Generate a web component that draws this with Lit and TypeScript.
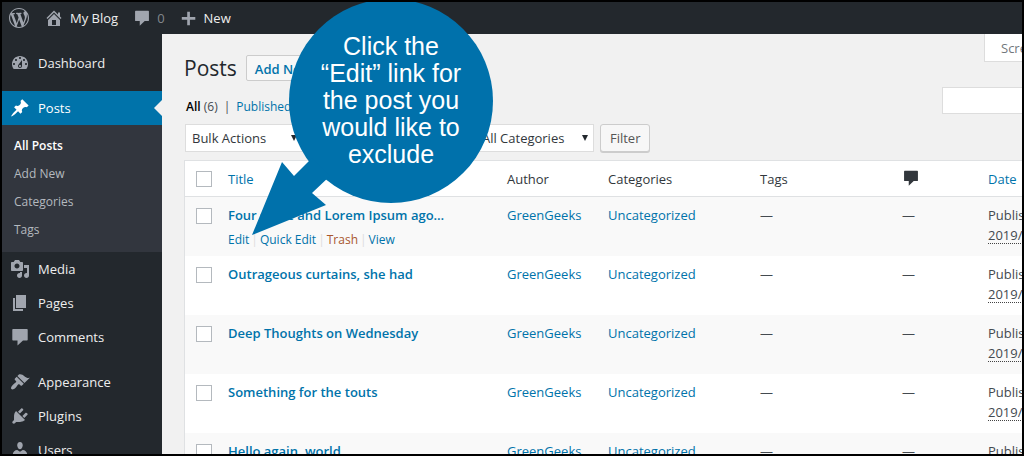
import { LitElement, html, css, svg, nothing } from "lit";
import { customElement } from "lit/decorators.js";
import { classMap } from "lit/directives/class-map.js";

const ICONS: Record<string, string> = {
  wordpress:
    "M20 10c0-5.51-4.49-10-10-10C4.48 0 0 4.49 0 10c0 5.52 4.48 10 10 10 5.51 0 10-4.48 10-10zM7.78 15.37L4.37 6.22c.55-.02 1.17-.08 1.17-.08.5-.06.44-1.13-.06-1.11 0 0-1.45.11-2.37.11-.18 0-.37 0-.58-.01C4.12 2.69 6.87 1.11 10 1.11c2.33 0 4.45.87 6.05 2.34-.68-.11-1.65.39-1.65 1.58 0 .74.45 1.36.9 2.1.35.61.55 1.36.55 2.46 0 1.49-1.4 5-1.4 5l-3.03-8.37c.54-.02.82-.17.82-.17.5-.05.44-1.25-.06-1.22 0 0-1.44.12-2.38.12-.87 0-2.33-.12-2.33-.12-.5-.03-.56 1.2-.06 1.22l.92.08 1.26 3.41zM17.41 10c.24-.64.74-1.87.43-4.25.7 1.29 1.05 2.71 1.05 4.25 0 3.29-1.73 6.24-4.4 7.78.97-2.59 1.94-5.2 2.92-7.78zM6.1 18.09C3.12 16.65 1.11 13.53 1.11 10c0-1.3.23-2.48.72-3.59C3.25 10.3 4.67 14.2 6.1 18.09zm4.03-6.63l2.58 6.98c-.86.29-1.76.45-2.71.45-.79 0-1.57-.11-2.29-.33.81-2.38 1.62-4.74 2.42-7.1z",
  home: "M16 8.5l1.53 1.53-1.06 1.06L10 4.6l-6.47 6.49-1.06-1.06L10 2.5l4 4v-2h2v4zm-6-2.46l6 5.99V18H4v-5.97zM12 17v-5H8v5h4z",
  plus: "M17 9v3h-6v6H8v-6H2V9h6V3h3v6z",
  dashboard:
    "M3.76 16h12.48c1.1-1.37 1.76-3.11 1.76-5 0-4.42-3.58-8-8-8s-8 3.58-8 8c0 1.89.66 3.63 1.76 5zM10 4c.55 0 1 .45 1 1s-.45 1-1 1-1-.45-1-1 .45-1 1-1zM6 6c.55 0 1 .45 1 1s-.45 1-1 1-1-.45-1-1 .45-1 1-1zm8 0c.55 0 1 .45 1 1s-.45 1-1 1-1-.45-1-1 .45-1 1-1zm-5.37 5.55L12 7v6c0 1.1-.9 2-2 2s-2-.9-2-2c0-.57.24-1.08.63-1.45zM4 10c.55 0 1 .45 1 1s-.45 1-1 1-1-.45-1-1 .45-1 1-1zm12 0c.55 0 1 .45 1 1s-.45 1-1 1-1-.45-1-1 .45-1 1-1zm-5 3c0-.55-.45-1-1-1s-1 .45-1 1 .45 1 1 1 1-.45 1-1z",
  pin: "M10.44 3.02l1.82-1.82 6.36 6.35-1.83 1.82c-1.05-.68-2.48-.57-3.41.36l-.75.75c-.92.93-1.04 2.35-.35 3.41l-1.83 1.82-2.41-2.41-2.8 2.79c-.42.42-3.38 2.71-3.8 2.29s1.86-3.39 2.28-3.81l2.79-2.79L4.1 9.36l1.83-1.82c1.05.69 2.48.57 3.4-.36l.75-.75c.93-.92 1.05-2.35.36-3.41z",
  media:
    "M13 11V4c0-.55-.45-1-1-1h-1.67L9 1H5L3.67 3H2c-.55 0-1 .45-1 1v7c0 .55.45 1 1 1h10c.55 0 1-.45 1-1zM7 4.5c1.38 0 2.5 1.12 2.5 2.5S8.38 9.5 7 9.5 4.5 8.38 4.5 7 5.62 4.5 7 4.5zM14 6h5v10.5c0 1.38-1.12 2.5-2.5 2.5S14 17.88 14 16.5s1.12-2.5 2.5-2.5c.17 0 .34.02.5.05V9h-3V6zm-4 8.05V13h2v3.5c0 1.38-1.12 2.5-2.5 2.5S7 17.88 7 16.5 8.12 14 9.5 14c.17 0 .34.02.5.05z",
  pages: "M6 15V2h10v13H6zm-1 1h8v2H3V5h2v11z",
  comment: "M3 2h14c.4 0 .7.3.7.7v10c0 .4-.3.7-.7.7h-4L7.5 18.500v-5.100H3c-.4 0-.7-.3-.7-.7v-10c0-.4.3-.7.7-.7z",
  brush:
    "M14.48 11.06L7.41 3.99l1.5-1.5c.5-.56 2.3-.47 3.51.32 1.21.8 1.43 1.28 2.91 2.1 1.18.64 2.45 1.26 4.45.85zm-.71.71L6.7 4.7 4.93 6.47c-.39.39-.39 1.02 0 1.41l1.06 1.06c.39.39.39 1.03 0 1.42-.6.6-1.43 1.11-2.21 1.69-.35.26-.7.53-1.01.84C1.43 14.23.4 16.08 1.4 17.07c.99 1 2.84-.03 4.18-1.36.31-.31.58-.66.85-1.02.57-.78 1.08-1.61 1.69-2.21.39-.39 1.02-.39 1.41 0l1.06 1.06c.39.39 1.02.39 1.41 0z",
  plug: "M13.11 4.36L9.87 7.6 8 5.73l3.24-3.24c.35-.34 1.05-.2 1.56.32.52.51.66 1.21.31 1.55zm-8 1.77l.91-1.12 9.01 9.01-1.19.84c-.71.71-2.63 1.16-3.82 1.16H6.14L4.9 17.26c-.59.59-1.54.59-2.12 0-.59-.58-.59-1.53 0-2.12l1.24-1.24v-3.88c0-1.13.4-3.19 1.09-3.89zm7.26 3.97l3.24-3.24c.34-.35 1.04-.21 1.55.31.52.51.66 1.21.31 1.55l-3.24 3.25z",
  user: "M10 9.25c-2.27 0-2.73-3.44-2.73-3.44C7 4.02 7.82 2 9.97 2c2.16 0 2.98 2.02 2.71 3.81 0 0-.41 3.44-2.68 3.44zm0 2.57L12.72 10c2.39 0 4.52 2.33 4.52 4.53v2.49s-3.65 1.13-7.24 1.13c-3.65 0-7.24-1.13-7.24-1.13v-2.49c0-2.25 1.94-4.48 4.47-4.48z",
};

const icon = (name: string) => html`
  <svg class="icon" viewBox="0 0 20 20" aria-hidden="true">${svg`<path d=${ICONS[name]}></path>`}</svg>
`;

interface MenuItem {
  label: string;
  icon: string;
  current?: boolean;
  gap?: boolean;
  children?: string[];
}

const MENU: MenuItem[] = [
  { label: "Dashboard", icon: "dashboard" },
  {
    label: "Posts",
    icon: "pin",
    current: true,
    gap: true,
    children: ["All Posts", "Add New", "Categories", "Tags"],
  },
  { label: "Media", icon: "media" },
  { label: "Pages", icon: "pages" },
  { label: "Comments", icon: "comment" },
  { label: "Appearance", icon: "brush", gap: true },
  { label: "Plugins", icon: "plug" },
  { label: "Users", icon: "user" },
];

const POSTS = [
  "Four score and Lorem Ipsum ago…",
  "Outrageous curtains, she had",
  "Deep Thoughts on Wednesday",
  "Something for the touts",
  "Hello again, world",
];

@customElement("app-root")
export class AppRoot extends LitElement {
  static styles = css`
    :host {
      display: block;
      --blue: #0073aa;
      --ink: #23282d;
      --text: #444a50;
      --line: #dfe1e3;
    }
    * {
      box-sizing: border-box;
    }
    a {
      color: var(--blue);
      text-decoration: none;
    }
    .frame {
      position: relative;
      display: flex;
      flex-direction: column;
      height: 100vh;
      overflow: hidden;
      border: 2px solid #000;
      background: #f1f1f1;
      color: var(--text);
      font: 13px/20px "Open Sans", "Noto Sans", sans-serif;
    }
    .icon {
      display: block;
      flex: none;
      width: 20px;
      height: 20px;
      fill: #a0a5ae;
    }

    .toolbar {
      display: flex;
      flex: none;
      align-items: center;
      gap: 15px;
      height: 32px;
      padding: 0 7px;
      background: var(--ink);
    }
    .toolbar a {
      display: flex;
      align-items: center;
      gap: 6px;
      color: #eee;
    }
    .toolbar .muted {
      color: #82878c;
    }
    .toolbar .small .icon {
      width: 18px;
      height: 18px;
    }

    .body {
      display: flex;
      flex: 1;
      min-height: 0;
    }
    .sidebar {
      flex: none;
      width: 160px;
      padding-top: 12px;
      background: var(--ink);
    }
    .menu,
    .submenu {
      margin: 0;
      padding: 0;
      list-style: none;
    }
    .gap {
      margin-top: 11px;
    }
    .item {
      display: flex;
      align-items: center;
      gap: 8px;
      height: 34px;
      padding-left: 8px;
      color: #eee;
    }
    .current {
      background: var(--blue);
      color: #fff;
    }
    .current .icon {
      fill: #fff;
    }
    .current::after {
      content: "";
      margin-left: auto;
      border: 8px solid transparent;
      border-left-width: 0;
      border-right-color: #f1f1f1;
    }
    .submenu {
      padding: 7px 0 8px;
      background: #32363e;
    }
    .submenu a {
      display: block;
      padding: 4px 12px;
      color: #b4b9be;
      font-size: 12px;
    }
    .submenu .active {
      color: #fff;
      font-weight: 600;
    }

    .main {
      flex: 1;
      min-width: 0;
      margin-right: -60px;
      padding-left: 22px;
    }
    .head {
      display: flex;
      align-items: flex-start;
      justify-content: space-between;
      height: 53px;
    }
    .title {
      display: flex;
      align-items: center;
      gap: 9px;
      padding-top: 21px;
    }
    h1 {
      margin: 0;
      color: var(--ink);
      font-size: 21px;
      line-height: 26px;
      font-weight: 400;
    }
    .add {
      height: 26px;
      padding: 0 8px;
      border: 1px solid #ccc;
      border-radius: 2px;
      background: #f7f7f7;
      font-weight: 600;
      line-height: 26px;
    }
    button {
      font: inherit;
      cursor: pointer;
    }
    .options {
      width: 98px;
      height: 28px;
      padding: 0 0 0 16px;
      border: 1px solid #ddd;
      border-top: 0;
      background: #fff;
      color: #72777c;
      text-align: left;
      white-space: nowrap;
    }
    .views {
      display: flex;
      justify-content: space-between;
      align-items: flex-start;
      height: 37px;
    }
    .links {
      display: flex;
      gap: 6px;
      padding: 10px 0 0 2px;
      font-size: 12px;
    }
    .links b {
      color: #000;
      font-weight: 600;
    }
    input,
    select {
      margin: 0;
      border: 1px solid #ddd;
      border-radius: 0;
      background: #fff;
      color: #32373c;
      font: inherit;
      appearance: none;
    }
    .search {
      width: 140px;
      height: 27px;
      padding: 0 8px;
    }
    .actions {
      display: flex;
      gap: 6px;
      padding: 0 0 8px 1px;
    }
    .pick {
      display: grid;
      align-items: center;
    }
    .pick > * {
      grid-area: 1 / 1;
    }
    .pick select {
      width: 100%;
      height: 28px;
      padding: 0 24px 0 6px;
    }
    .caret {
      justify-self: end;
      width: 6px;
      height: 6px;
      margin-right: 6px;
      fill: var(--ink);
      pointer-events: none;
    }
    .btn {
      height: 28px;
      padding: 0 9px;
      border: 1px solid #ccc;
      border-radius: 3px;
      background: #f7f7f7;
      box-shadow: 0 1px 0 #ccc;
      color: #555;
    }
    .bulk {
      width: 118px;
    }
    .dates {
      width: 100px;
    }
    .cats {
      width: 119px;
    }

    table {
      width: 100%;
      border: 1px solid var(--line);
      border-spacing: 0;
      background: #fff;
      table-layout: fixed;
    }
    th,
    td {
      padding: 8px 10px 6px;
      text-align: left;
      vertical-align: top;
      font-weight: 400;
    }
    th {
      height: 36px;
      border-bottom: 1px solid var(--line);
      color: #32373c;
      line-height: 21px;
    }
    td {
      height: 59px;
    }
    th:first-child,
    td:first-child {
      padding-left: 11px;
      padding-right: 0;
    }
    tbody tr:nth-child(odd) {
      background: #f9f9f9;
    }
    .c-check {
      width: 33px;
    }
    .c-author {
      width: 101px;
    }
    .c-cats {
      width: 152px;
    }
    .c-tags {
      width: 142px;
    }
    .c-count {
      width: 86px;
    }
    .c-date {
      width: 103px;
    }
    input[type="checkbox"] {
      display: block;
      width: 16px;
      height: 16px;
      margin-top: 2px;
      border-color: #b4b9be;
    }
    td input[type="checkbox"] {
      margin-top: 3px;
    }
    input[type="checkbox"]:checked {
      background: var(--blue);
    }
    .post {
      font-weight: 600;
    }
    .row-actions {
      display: flex;
      gap: 2px;
      padding-top: 5px;
      color: #ddd;
      font-size: 12px;
    }
    .row-actions .trash {
      color: #a8562e;
    }
    th .icon {
      fill: #32373c;
      width: 18px;
      height: 18px;
    }
    .date {
      white-space: nowrap;
    }
    abbr {
      display: inline-block;
      border-bottom: 1px dotted #444;
      line-height: 16px;
      text-decoration: none;
    }
    .callout {
      position: absolute;
      left: 248px;
      top: -4px;
      width: 246px;
      height: 240px;
      pointer-events: none;
    }
    .callout svg {
      display: block;
      width: 100%;
      height: 100%;
      fill: #0071ab;
    }
    .callout p {
      position: absolute;
      top: 35px;
      left: 39px;
      width: 204px;
      margin: 0;
      color: #fff;
      font: 25px/27px "Liberation Sans", Arial, sans-serif;
      text-align: center;
    }
  `;

  private menuItem(m: MenuItem) {
    return html`
      <li class=${classMap({ gap: !!m.gap })}>
        <a href="#" class=${classMap({ item: true, current: !!m.current })}>${icon(m.icon)}${m.label}</a>
        ${m.children
          ? html`<ul class="submenu">
              ${m.children.map(
                (c, i) => html`<li><a href="#" class=${classMap({ active: i === 0 })}>${c}</a></li>`
              )}
            </ul>`
          : nothing}
      </li>
    `;
  }

  private pick(cls: string, label: string) {
    return html`
      <span class="pick ${cls}">
        <select aria-label=${label}>
          <option>${label}</option>
        </select>
        <svg class="caret" viewBox="0 0 6 6" aria-hidden="true"><path d="M0 0h6L3 6z"></path></svg>
      </span>
    `;
  }

  private row(title: string, i: number) {
    return html`
      <tr>
        <td><input type="checkbox" aria-label=${`Select ${title}`} /></td>
        <td>
          <a href="#" class="post">${title}</a>
          ${i === 0
            ? html`<div class="row-actions">
                <a href="#">Edit</a>|<a href="#">Quick Edit</a>|<a href="#" class="trash">Trash</a>|<a href="#">View</a>
              </div>`
            : nothing}
        </td>
        <td><a href="#">GreenGeeks</a></td>
        <td><a href="#">Uncategorized</a></td>
        <td>—</td>
        <td>—</td>
        <td class="date">Published<br /><abbr>2019/</abbr></td>
      </tr>
    `;
  }

  render() {
    return html`
      <div class="frame">
        <header class="toolbar">
          <a href="#" aria-label="WordPress">${icon("wordpress")}</a>
          <a href="#">${icon("home")}My Blog</a>
          <a href="#" class="small muted">${icon("comment")}0</a>
          <a href="#" class="small">${icon("plus")}New</a>
        </header>
        <div class="body">
          <nav class="sidebar">
            <ul class="menu">
              ${MENU.map((m) => this.menuItem(m))}
            </ul>
          </nav>
          <main class="main">
            <div class="head">
              <div class="title">
                <h1>Posts</h1>
                <a href="#" class="add">Add New</a>
              </div>
              <button class="options">Screen Options</button>
            </div>
            <div class="views">
              <div class="links">
                <span><b>All</b> (6)</span><span>|</span><a href="#">Published</a>
              </div>
              <input class="search" type="search" aria-label="Search posts" />
            </div>
            <div class="actions">
              ${this.pick("bulk", "Bulk Actions")}
              <button class="btn">Apply</button>
              ${this.pick("dates", "All dates")} ${this.pick("cats", "All Categories")}
              <button class="btn">Filter</button>
            </div>
            <table>
              <colgroup>
                <col class="c-check" />
                <col />
                <col class="c-author" />
                <col class="c-cats" />
                <col class="c-tags" />
                <col class="c-count" />
                <col class="c-date" />
              </colgroup>
              <thead>
                <tr>
                  <th><input type="checkbox" aria-label="Select all" /></th>
                  <th><a href="#">Title</a></th>
                  <th>Author</th>
                  <th>Categories</th>
                  <th>Tags</th>
                  <th aria-label="Comments">${icon("comment")}</th>
                  <th><a href="#">Date</a></th>
                </tr>
              </thead>
              <tbody>
                ${POSTS.map((p, i) => this.row(p, i))}
              </tbody>
            </table>
          </main>
        </div>
        <aside class="callout">
          <svg viewBox="250 -2 246 240" aria-hidden="true">
            <circle cx="391" cy="101" r="102"></circle>
            <path d="M252 235L282 162L294 176L312 158L330 176L312 193L326 205z"></path>
          </svg>
          <p>Click the<br />“Edit” link for<br />the post you<br />would like to<br />exclude</p>
        </aside>
      </div>
    `;
  }
}
